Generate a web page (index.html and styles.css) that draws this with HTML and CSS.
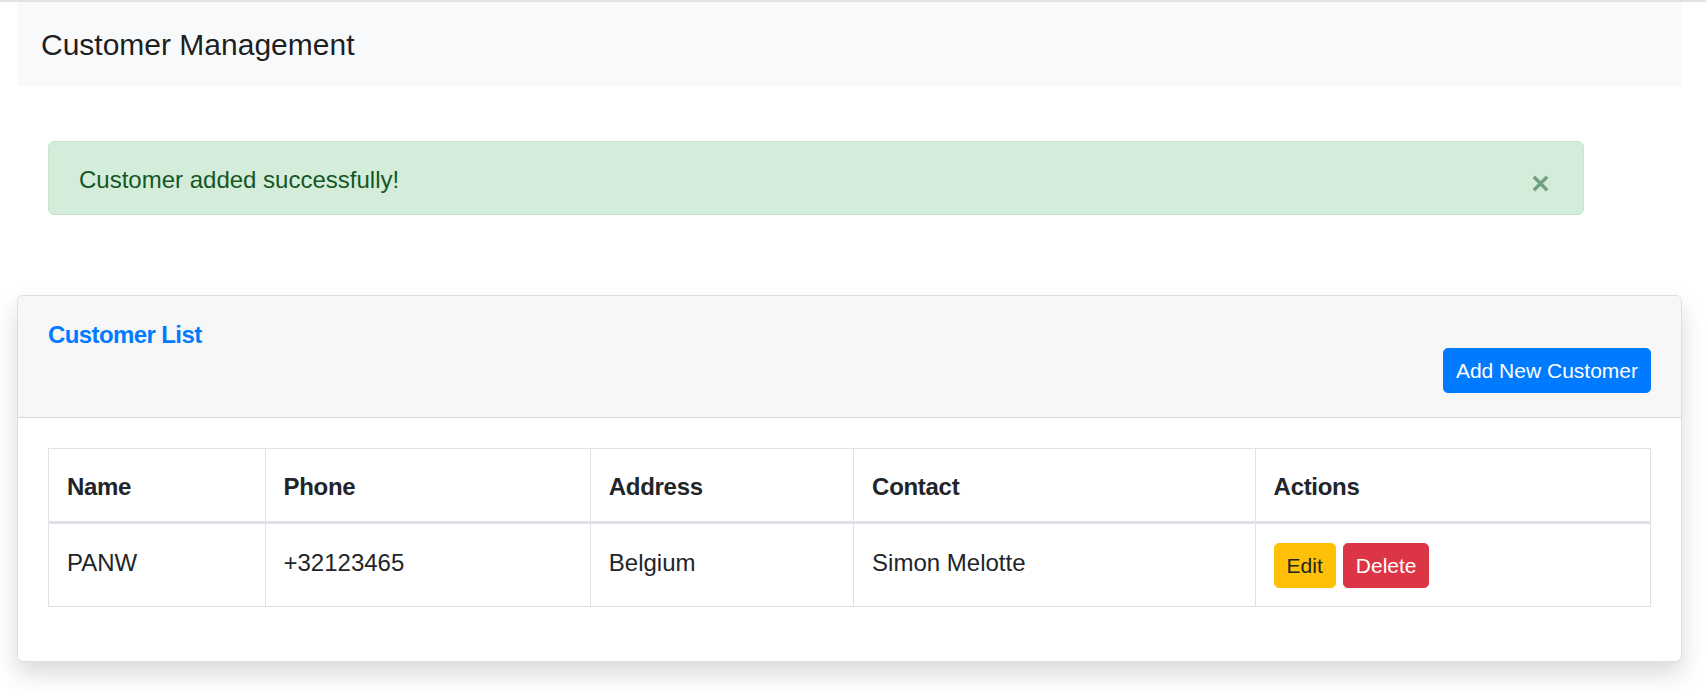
FILE: index.html
```html
<!DOCTYPE html>
<html lang="en">
<head>
<meta charset="utf-8">
<title>Customer Management</title>
<link rel="stylesheet" href="styles.css">
</head>
<body>
<div class="page">
  <nav class="navbar">
    <span class="brand">Customer Management</span>
  </nav>

  <div class="alert">
    <span class="alert-text">Customer added successfully!</span>
    <button class="close" aria-label="Close">
      <svg width="17" height="17" viewBox="0 0 17 17"><path d="M1.8 1.8 L15.2 15.2 M15.2 1.8 L1.8 15.2" stroke="currentColor" stroke-width="3.4" stroke-linecap="butt" fill="none"/></svg>
    </button>
  </div>

  <section class="card">
    <header class="card-header">
      <h5 class="card-title">Customer List</h5>
      <button class="btn btn-sm btn-primary add-btn">Add New Customer</button>
    </header>
    <div class="card-body">
      <table class="table">
        <thead>
          <tr>
            <th class="c-name">Name</th>
            <th class="c-phone">Phone</th>
            <th class="c-address">Address</th>
            <th class="c-contact">Contact</th>
            <th class="c-actions">Actions</th>
          </tr>
        </thead>
        <tbody>
          <tr>
            <td>PANW</td>
            <td>+32123465</td>
            <td>Belgium</td>
            <td>Simon Melotte</td>
            <td>
              <div class="actions">
                <button class="btn btn-sm btn-warning">Edit</button>
                <button class="btn btn-sm btn-danger">Delete</button>
              </div>
            </td>
          </tr>
        </tbody>
      </table>
    </div>
  </section>
</div>
</body>
</html>
```

FILE: styles.css
```css
html, body {
  margin: 0;
  padding: 0;
  background: #ffffff;
}

body {
  border-top: 2px solid #e0e2e3;
  font-family: "Liberation Sans", Arial, sans-serif;
  font-size: 24px;
  line-height: 36px;
  color: #212529;
}

.page {
  padding: 0 24px 40px 17px;
}

.navbar {
  background: #f8f9fa;
  padding: 12px 24px;
  height: 60px;
  display: flex;
  align-items: flex-start;
}

.brand {
  display: inline-block;
  padding: 7.5px 0;
  font-size: 30px;
  line-height: 45px;
  color: rgba(0, 0, 0, 0.9);
}

.alert {
  margin: 55px 98px 0 31px;
  padding: 20px 34px 16px 30px;
  background: #d4edda;
  border: 1px solid #c3e6cb;
  border-radius: 6px;
  color: #155724;
  display: flex;
  justify-content: space-between;
  align-items: flex-start;
}

.close {
  background: none;
  border: 0;
  padding: 0;
  margin-top: 13px;
  width: 17px;
  height: 17px;
  color: #72a27d;
  display: block;
  cursor: pointer;
}

.close svg {
  display: block;
}

.card {
  margin-top: 80px;
  background: #ffffff;
  border: 1px solid rgba(0, 0, 0, 0.125);
  border-radius: 6px;
  box-shadow: 0 12px 24px rgba(0, 0, 0, 0.15);
  overflow: hidden;
}

.card-header {
  background: #f7f7f7;
  border-bottom: 1px solid rgba(0, 0, 0, 0.125);
  padding: 21px 30px 24px 30px;
  display: flex;
  justify-content: space-between;
  align-items: flex-start;
}

.card-title {
  margin: 0;
  font-size: 24px;
  line-height: 36px;
  font-weight: 700;
  letter-spacing: -0.6px;
  color: #007bff;
}

.add-btn {
  margin-top: 31px;
}

.btn {
  font-family: "Liberation Sans", Arial, sans-serif;
  border: 1px solid transparent;
  cursor: pointer;
  display: inline-block;
}

.btn-sm {
  font-size: 21px;
  line-height: 31px;
  padding: 6px 12px;
  border-radius: 4.8px;
}

.btn-primary {
  background: #007bff;
  border-color: #007bff;
  color: #ffffff;
}

.btn-warning {
  background: #ffc107;
  border-color: #ffc107;
  color: #212529;
}

.btn-danger {
  background: #dc3545;
  border-color: #dc3545;
  color: #ffffff;
}

.card-body {
  padding: 30px 30px 30px 30px;
}

.table {
  width: 100%;
  border-collapse: collapse;
  margin-bottom: 24px;
  color: #212529;
}

.table th,
.table td {
  border: 1px solid #dee2e6;
  text-align: left;
  vertical-align: top;
}

.table th {
  font-weight: 700;
  letter-spacing: -0.3px;
  padding: 20px 18px 16px 18px;
}

.table td {
  padding: 21px 18px 18px 18px;
}

.table thead th {
  border-bottom: 3px solid #dee2e6;
}

.c-name { width: 179.5px; }
.c-phone { width: 288.3px; }
.c-address { width: 226.3px; }
.c-contact { width: 364.5px; }
.c-actions { width: auto; }

.actions {
  display: flex;
  gap: 7px;
  height: 45px;
  margin-top: -2px;
}
```
